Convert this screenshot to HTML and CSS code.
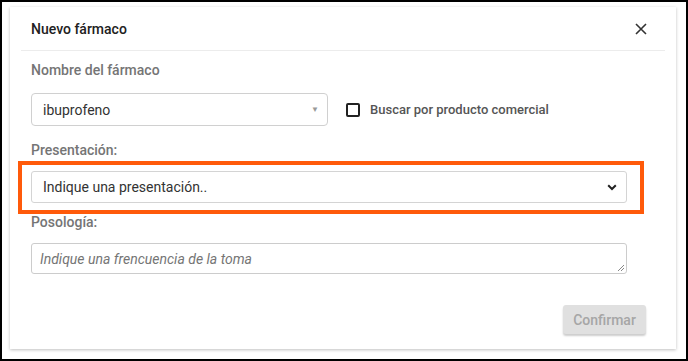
FILE: index.html
```html
<!DOCTYPE html>
<html lang="es">
<head>
    <meta charset="UTF-8">
    <meta name="viewport" content="width=device-width, initial-scale=1.0">
    <title>Nuevo fármaco</title>
    <link rel="stylesheet" href="styles.css">
</head>
<body>
    <div class="frame">
        <div class="dialog">
            <div class="dialog-header">
                <div class="dialog-title">Nuevo fármaco</div>
                <svg class="close" width="12" height="12" viewBox="0 0 12 12">
                    <path d="M1 1 L11 11 M11 1 L1 11" stroke="#333" stroke-width="1.6" fill="none"/>
                </svg>
            </div>

            <div class="dialog-body">
                <div class="label">Nombre del fármaco</div>
                <div class="row">
                    <div class="combo">
                        <span>ibuprofeno</span>
                        <span class="caret">▼</span>
                    </div>
                    <label class="check">
                        <span class="box"></span>
                        Buscar por producto comercial
                    </label>
                </div>

                <div class="label label-gap">Presentación:</div>
                <div class="highlight">
                    <div class="select">
                        <span>Indique una presentación..</span>
                        <svg width="10" height="7" viewBox="0 0 10 7">
                            <path d="M1.2 1.2 L5 5 L8.8 1.2" stroke="#222" stroke-width="2" fill="none"/>
                        </svg>
                    </div>
                </div>

                <div class="label label-gap2">Posología:</div>
                <div class="textarea">
                    <span>Indique una frencuencia de la toma</span>
                    <svg class="grip" width="8" height="8" viewBox="0 0 8 8">
                        <path d="M7 1 L1 7 M7 4 L4 7" stroke="#888" stroke-width="1" fill="none"/>
                    </svg>
                </div>
            </div>

            <div class="dialog-footer">
                <button class="btn" disabled>Confirmar</button>
            </div>
        </div>
    </div>
</body>
</html>
```

FILE: styles.css
```css
* { margin: 0; padding: 0; box-sizing: border-box; }
body {
    font-family: Roboto, "Liberation Sans", sans-serif;
    background: #fff;
}
.frame {
    width: 688px;
    height: 361px;
    border: 2px solid #000;
    padding: 5px 10px 10px 8px;
}
.dialog {
    width: 666px;
    height: 342px;
    background: #fff;
    box-shadow: 0 1px 3px rgba(0,0,0,0.25);
    display: flex;
    flex-direction: column;
}
.dialog-header {
    height: 44px;
    margin: 0 11px;
    padding: 0 10px;
    border-bottom: 1px solid #ececec;
    display: flex;
    align-items: center;
    justify-content: space-between;
}
.dialog-title {
    font-size: 14px;
    font-weight: 500;
    color: #212121;
}
.close { margin-right: 8px; }
.dialog-body {
    padding: 9px 49px 0 21px;
}
.label {
    font-size: 14px;
    line-height: 20px;
    font-weight: 500;
    color: #757575;
}
.label-gap { margin-top: 14px; }
.label-gap2 { margin-top: 9px; }
.row {
    margin-top: 13px;
    display: flex;
    align-items: center;
}
.combo {
    width: 297px;
    height: 33px;
    border: 1px solid #d0d0d0;
    border-radius: 4px;
    padding: 0 8px 0 11px;
    display: flex;
    align-items: center;
    justify-content: space-between;
    font-size: 14px;
    color: #333;
}
.caret {
    font-size: 8px;
    color: #999;
}
.check {
    margin-left: 18px;
    display: flex;
    align-items: center;
    font-size: 13px;
    font-weight: 500;
    color: #555;
}
.box {
    width: 14px;
    height: 14px;
    border: 2px solid #222;
    border-radius: 2px;
    margin-right: 10px;
}
.highlight {
    position: relative;
    margin-top: 11px;
}
.highlight::after {
    content: "";
    position: absolute;
    left: -13px;
    right: -17px;
    top: -10px;
    bottom: -11px;
    border: 4px solid #ff5a0a;
}
.select {
    height: 32px;
    border: 1px solid #d4d4d4;
    border-radius: 3px;
    padding: 0 9px 0 11px;
    display: flex;
    align-items: center;
    justify-content: space-between;
    font-size: 14px;
    color: #333;
}
.textarea {
    position: relative;
    margin-top: 11px;
    height: 31px;
    border: 1px solid #ccc;
    border-radius: 3px;
    padding: 0 8px;
    display: flex;
    align-items: center;
    font-size: 14px;
    font-style: italic;
    color: #757575;
}
.grip {
    position: absolute;
    right: 1px;
    bottom: 1px;
}
.dialog-footer {
    margin-top: auto;
    padding: 0 30px 15px 0;
    display: flex;
    justify-content: flex-end;
}
.btn {
    width: 83px;
    height: 29px;
    border: none;
    border-radius: 3px;
    background: #e0e0e0;
    color: #a6a6a6;
    font-family: Roboto, "Liberation Sans", sans-serif;
    font-size: 14px;
    font-weight: 500;
    box-shadow: 0 2px 2px rgba(0,0,0,0.2);
}
```
